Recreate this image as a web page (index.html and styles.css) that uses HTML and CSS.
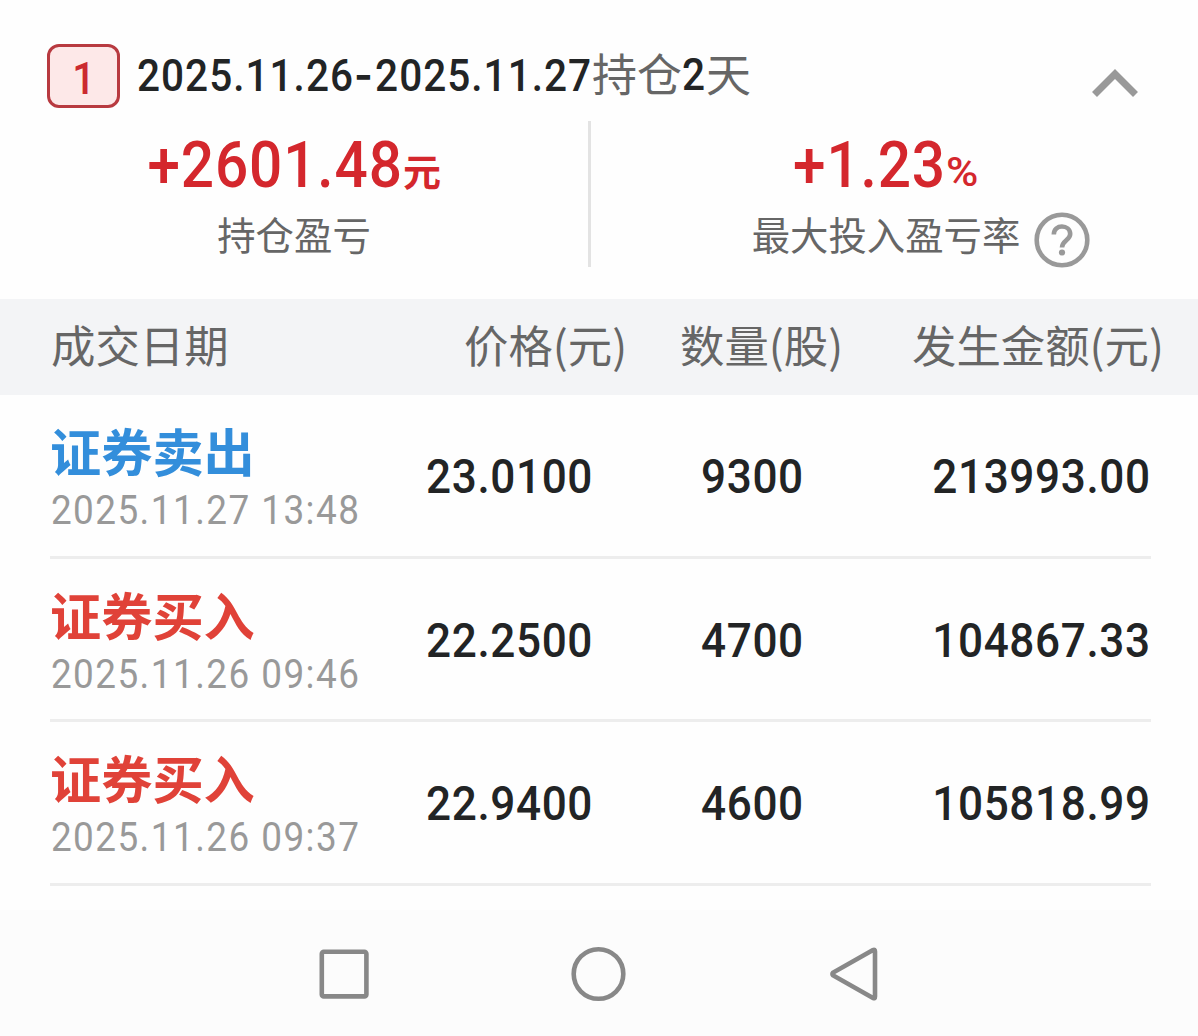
FILE: index.html
```html
<!DOCTYPE html>
<html lang="zh-CN">
  <head>
    <meta charset="UTF-8" />
    <meta name="viewport" content="width=device-width, initial-scale=1.0" />
    <title>持仓明细</title>
    <link rel="stylesheet" href="styles.css">
  </head>
  <body>
    <div class="position-header">
      <div class="badge"><span class="num">1</span></div>
      <h2 class="period">
        <span class="num date">2025.11.26<span class="dash">-</span>2025.11.27</span><span>持仓</span><span class="num days">2</span><span>天</span>
      </h2>
      <svg class="chevron" viewBox="0 0 46 28">
        <path d="M2.5 25.5 L23 5 L43.5 25.5" />
      </svg>
    </div>

    <div class="summary">
      <div class="summary-item">
        <div class="value"><span class="num">+2601.48</span><span class="unit">元</span></div>
        <div class="label">持仓盈亏</div>
      </div>
      <div class="divider"></div>
      <div class="summary-item">
        <div class="value rate"><span class="num">+1.23</span><span class="percent">%</span></div>
        <div class="label">
          最大投入盈亏率
          <svg class="help" viewBox="0 0 56 56">
            <circle cx="28" cy="28" r="25.3" />
            <path d="M19.8 22.5 C19.8 11.5 36.2 12.3 36.2 22 C36.2 28 28 28.5 28 35.5" />
            <circle class="dot" cx="28" cy="40.5" r="3.1" />
          </svg>
        </div>
      </div>
    </div>

    <div class="table">
      <div class="table-head">
        <span>成交日期</span>
        <span>价格(元)</span>
        <span>数量(股)</span>
        <span>发生金额(元)</span>
      </div>
      <div class="table-row">
        <div>
          <div class="type sell">证券卖出</div>
          <div class="time num">2025.11.27 13:48</div>
        </div>
        <span class="num cell">23.0100</span>
        <span class="num cell">9300</span>
        <span class="num cell">213993.00</span>
      </div>
      <div class="table-row">
        <div>
          <div class="type buy">证券买入</div>
          <div class="time num">2025.11.26 09:46</div>
        </div>
        <span class="num cell">22.2500</span>
        <span class="num cell">4700</span>
        <span class="num cell">104867.33</span>
      </div>
      <div class="table-row">
        <div>
          <div class="type buy">证券买入</div>
          <div class="time num">2025.11.26 09:37</div>
        </div>
        <span class="num cell">22.9400</span>
        <span class="num cell">4600</span>
        <span class="num cell">105818.99</span>
      </div>
    </div>

    <div class="navbar">
      <svg viewBox="0 0 56 56"><rect x="5.8" y="5.8" width="44.6" height="44.6" rx="2" /></svg>
      <svg viewBox="0 0 56 56"><circle cx="27.5" cy="28" r="24.8" /></svg>
      <svg viewBox="0 0 56 56"><path d="M47 4 Q49 3 49 5.5 V50.5 Q49 53 47 52 L7.2 29.5 Q5.6 28 7.2 26.5 Z" /></svg>
    </div>
  </body>
</html>
```
FILE: styles.css
```css
* {
  box-sizing: border-box;
}

body {
  margin: 0;
  height: 1036px;
  display: flex;
  flex-direction: column;
  overflow: hidden;
  background-color: #fefefe;
  color: #666;
  font-family: "Noto Sans CJK SC", sans-serif;
}

.num {
  display: inline-block;
  font-family: Roboto, sans-serif;
  font-weight: 500;
  white-space: nowrap;
  transform: scaleX(0.9);
  transform-origin: left center;
}

/* header */
.position-header {
  display: flex;
  height: 121px;
  padding: 44px 60px 0 47px;
}

.badge {
  width: 73px;
  height: 64px;
  border: 3px solid #b83a40;
  border-radius: 12px;
  background-color: #fde8e8;
  color: #cb2a30;
  font-size: 45px;
  line-height: 56px;
  text-align: center;
}

.badge .num {
  line-height: 56px;
  transform-origin: center;
}

.period {
  display: flex;
  flex: 1;
  margin: 0 0 0 17px;
  font-size: 45px;
  font-weight: 400;
  line-height: 57px;
  height: 62px;
}

.period .num {
  color: #222425;
  line-height: 62px;
}

.date {
  width: 455px;
  letter-spacing: 1.15px;
}

.dash {
  font-family: Inter, sans-serif;
  font-weight: 600;
  letter-spacing: 2.5px;
}

.days {
  width: 24px;
}

.chevron {
  width: 46px;
  height: 28px;
  margin-top: 25px;
}

.chevron path {
  fill: none;
  stroke: #999;
  stroke-width: 7;
}

/* summary */
.summary {
  display: grid;
  grid-template-columns: 588px 3px 590px;
  height: 178px;
}

.divider {
  height: 146px;
  background-color: #e3e3e3;
}

.value {
  display: flex;
  justify-content: center;
  height: 86px;
  padding-right: 28px;
  color: #d4272d;
  font-size: 65px;
  line-height: 88px;
}

.rate {
  padding-right: 20px;
}

.value .num {
  letter-spacing: 1px;
  transform-origin: right center;
}

.unit {
  font-size: 38px;
  font-weight: 700;
  line-height: 98px;
}

.percent {
  font-family: Roboto, sans-serif;
  font-size: 40px;
  font-weight: 500;
  line-height: 104px;
  transform: scaleX(1.1);
  transform-origin: left center;
}

.label {
  display: flex;
  justify-content: center;
  height: 60px;
  font-size: 38.4px;
  line-height: 53px;
}

.help {
  width: 56px;
  height: 56px;
  margin: 5px -70px 0 14px;
  fill: none;
  stroke: #999;
  stroke-width: 4.6;
}

.help .dot {
  fill: #999;
  stroke: none;
}

/* trades */
.table-head {
  display: grid;
  grid-template-columns: 413px 216px 232px 1fr;
  height: 96px;
  padding-left: 51px;
  background-color: #f3f4f6;
  font-size: 44.4px;
  line-height: 90px;
}

.table-row {
  display: grid;
  grid-template-columns: 376px 275px 1fr auto;
  height: 163.4px;
  margin: 0 47px 0 50px;
  border-bottom: 3px solid #ededed;
}

.table-head + .table-row {
  height: 164px;
}

.type {
  height: 76px;
  padding-top: 17px;
  font-size: 51.2px;
  font-weight: 700;
  line-height: 76px;
}

.sell {
  color: #338edb;
}

.buy {
  color: #e04238;
}

.time {
  margin-top: 15px;
  padding-left: 1px;
  color: #999;
  font-size: 41px;
  font-weight: 400;
  letter-spacing: 1.6px;
  line-height: 49px;
}

.cell {
  color: #222425;
  font-size: 49px;
  letter-spacing: 0.7px;
  line-height: 164px;
}

.cell:last-child {
  transform-origin: right center;
}

/* system navigation */
.navbar {
  display: flex;
  justify-content: center;
  gap: 199px;
  margin-top: 24px;
  padding-top: 36px;
  height: 126px;
  background-color: #fcfcfc;
}

.navbar svg {
  width: 56px;
  height: 56px;
  fill: none;
  stroke: #888;
  stroke-width: 4.6;
}
```
